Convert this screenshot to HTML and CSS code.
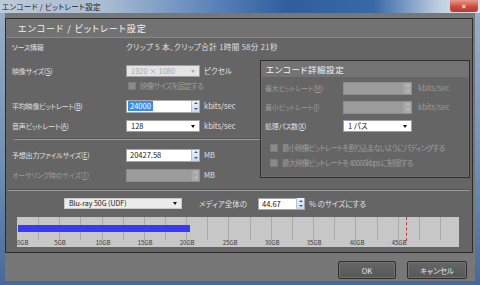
FILE: index.html
```html
<!DOCTYPE html>
<html lang="ja">
<head>
    <meta charset="UTF-8">
    <meta name="viewport" content="width=device-width, initial-scale=1.0">
    <link rel="stylesheet" href="styles.css">
    <title>エンコード / ビットレート設定</title>
</head>
<body>

<div class="titlebar">
    <span class="title">エンコード / ビットレート設定</span>
    <span class="close">✕</span>
</div>

<div class="client">
    <div class="panel">
        <div class="panel-head">エンコード / ビットレート設定</div>

        <div class="main">
            <div class="left">
                <div class="row source">
                    <span class="lbl">ソース情報</span>
                    <span>クリップ 5 本、クリップ合計 1時間 58分 21秒</span>
                </div>
                <div class="row r-size">
                    <span class="lbl">映像サイズ(<u>S</u>)</span>
                    <div class="combo disabled"><span>1920 × 1080</span><i class="arrow"></i></div>
                    <span class="unit">ピクセル</span>
                </div>
                <div class="row check-row left-check">
                    <span class="box"></span>
                    <span class="dim tight">映像サイズを固定する</span>
                </div>
                <div class="row r-avg">
                    <span class="lbl">平均映像ビットレート(<u>B</u>)</span>
                    <div class="spin"><span class="sel">24000</span><span class="spin-btn"><i class="up"></i><i class="down"></i></span></div>
                    <span class="unit">kbits/sec</span>
                </div>
                <div class="row r-audio">
                    <span class="lbl">音声ビットレート(<u>A</u>)</span>
                    <div class="combo"><span>128</span><i class="arrow"></i></div>
                    <span class="unit">kbits/sec</span>
                </div>
                <div class="sep"></div>
                <div class="row r-out">
                    <span class="lbl">予想出力ファイルサイズ(<u>E</u>)</span>
                    <div class="spin"><span>20427.58</span><span class="spin-btn"><i class="up"></i><i class="down"></i></span></div>
                    <span class="unit">MB</span>
                </div>
                <div class="row r-auth">
                    <span class="lbl dim">オーサリング時のサイズ(<u>T</u>)</span>
                    <div class="spin disabled"><span></span><span class="spin-btn"><i class="up"></i><i class="down"></i></span></div>
                    <span class="unit">MB</span>
                </div>
            </div>

            <div class="group">
                <div class="group-head">エンコード詳細設定</div>
                <div class="row g-max">
                    <span class="glbl dim">最大ビットレート(<u>M</u>)</span>
                    <div class="spin disabled"><span></span><span class="spin-btn"><i class="up"></i><i class="down"></i></span></div>
                    <span class="unit dim">kbits/sec</span>
                </div>
                <div class="row g-min">
                    <span class="glbl dim">最小ビットレート(<u>I</u>)</span>
                    <div class="spin disabled"><span></span><span class="spin-btn"><i class="up"></i><i class="down"></i></span></div>
                    <span class="unit dim">kbits/sec</span>
                </div>
                <div class="row g-pass">
                    <span class="glbl">処理パス数(<u>X</u>)</span>
                    <div class="combo"><span>1 パス</span><i class="arrow"></i></div>
                </div>
                <div class="row check-row g-check1">
                    <span class="box"></span>
                    <span class="dim tight">最小映像ビットレートを割り込まないようにパディングする</span>
                </div>
                <div class="row check-row g-check2">
                    <span class="box"></span>
                    <span class="dim tight">最大映像ビットレートを 40000kbps に制限する</span>
                </div>
            </div>
        </div>

        <div class="sep wide"></div>

        <div class="media-row">
            <div class="combo media"><span>Blu-ray 50G (UDF)</span><i class="arrow"></i></div>
            <span class="media-text">メディア全体の</span>
            <div class="spin pct"><span>44.67</span><span class="spin-btn"><i class="up"></i><i class="down"></i></span></div>
            <span>% のサイズにする</span>
        </div>

        <div class="chart">
            <div class="grid"></div>
            <div class="bar" style="width: 172px"></div>
            <div class="limit" style="left: 389px"></div>
            <span class="tick first" style="left: 0px">0GB</span>
            <span class="tick" style="left: 43px">5GB</span>
            <span class="tick" style="left: 86px">10GB</span>
            <span class="tick" style="left: 128px">15GB</span>
            <span class="tick" style="left: 170px">20GB</span>
            <span class="tick" style="left: 213px">25GB</span>
            <span class="tick" style="left: 255px">30GB</span>
            <span class="tick" style="left: 297px">35GB</span>
            <span class="tick" style="left: 340px">40GB</span>
            <span class="tick" style="left: 382px">45GB</span>
        </div>
    </div>

    <div class="buttons">
        <button class="btn ok">OK</button>
        <button class="btn cancel">キャンセル</button>
    </div>
</div>

</body>
</html>
```

FILE: styles.css
```css
* {
    box-sizing: border-box;
}

body {
    margin: 0;
    width: 480px;
    height: 285px;
    overflow: hidden;
    background: linear-gradient(180deg, #9cb0c8 0%, #6f8db3 60%, #46699a 100%);
    font-family: "Noto Sans CJK JP", "Noto Sans", sans-serif;
    font-feature-settings: "palt";
    font-size: 7.5px;
    line-height: 1;
    color: #e0e0e0;
    white-space: nowrap;
}

u {
    text-decoration: underline;
}

/* Title bar */
.titlebar {
    height: 13px;
    display: flex;
    align-items: center;
    padding-left: 2px;
    background: linear-gradient(90deg, #bccad9 0%, #a9bcd2 22%, #6389bc 42%, #2f5d9e 60%, #3a69a8 78%, #c3d2e3 92%, #d8e2ee 100%);
}

.title {
    color: #1e2228;
    font-size: 7.5px;
    letter-spacing: 0.3px;
}

.close {
    margin-left: auto;
    margin-right: 2px;
    align-self: flex-start;
    width: 28px;
    height: 12px;
    border-radius: 0 0 3px 3px;
    background: linear-gradient(#e49a8c, #c9483a 60%, #b83a2d);
    color: #fff;
    font-size: 7px;
    line-height: 12px;
    text-align: center;
}

/* Client area */
.client {
    margin: 0 5px;
    height: 268px;
    padding: 5px 2px 0 0;
    background: #777;
}

.panel {
    height: 235px;
    border: 1px solid #2c2c2c;
    background: #656565;
}

.panel-head {
    height: 19px;
    padding-left: 12px;
    display: flex;
    align-items: center;
    background: #727272;
    border-bottom: 1px solid #8a8a8a;
    color: #f2f2f2;
    font-size: 9px;
    letter-spacing: 1px;
}

.main {
    display: flex;
    height: 145px;
}

.left {
    width: 254px;
    padding-left: 6px;
}

.row {
    display: flex;
    align-items: center;
    height: 14px;
}

.lbl {
    width: 114px;
    flex-shrink: 0;
    font-size: 7px;
    letter-spacing: -0.2px;
}

.dim {
    color: #9c9c9c;
}

.tight {
    letter-spacing: -0.8px;
}

.unit {
    margin-left: 4px;
}

.source {
    height: 18px;
}

.source span + span {
    letter-spacing: 0.4px;
}

.r-size {
    margin-top: 8px;
}

.check-row {
    height: 11px;
}

.left-check {
    margin-top: 2px;
    padding-left: 116px;
}

.r-avg {
    margin-top: 8px;
}

.r-audio {
    margin-top: 6px;
}

.r-out {
    margin-top: 8px;
}

.r-auth {
    margin-top: 6px;
}

.sep {
    margin: 5px 0 0 2px;
    height: 2px;
    border-top: 1px solid #555;
    border-bottom: 1px solid #9a9a9a;
}

.sep.wide {
    margin: 6px 2px 0 2px;
}

/* Checkbox */
.box {
    width: 8px;
    height: 8px;
    margin-right: 4px;
    flex-shrink: 0;
    background: #8a8a8a;
    border: 1px solid #7c7c7c;
}

/* Combo box */
.combo {
    width: 74px;
    height: 12px;
    display: flex;
    align-items: center;
    padding-left: 4px;
    background: #fff;
    border: 1px solid #a0a0a0;
    color: #202020;
}

.combo.disabled {
    background: #e4e4e4;
    color: #a8a8a8;
}

.combo span {
    flex: 1;
}

.arrow {
    width: 0;
    height: 0;
    margin-right: 4px;
    border-left: 2.5px solid transparent;
    border-right: 2.5px solid transparent;
    border-top: 3px solid #111;
}

.combo.disabled .arrow {
    border-top-color: #aaa;
}

/* Spin box */
.spin {
    width: 74px;
    height: 13px;
    display: flex;
    align-items: center;
    padding-left: 1px;
    background: #fff;
    border: 1px solid #a8a8a8;
    color: #1a1a1a;
}

.spin > span:first-child {
    flex: 1;
    padding-left: 2px;
}

.spin .sel {
    flex: 0 0 auto !important;
    padding: 1px 2px;
    background: #3d8ee6;
    color: #fff;
}

.spin .sel + .spin-btn {
    margin-left: auto;
}

.spin-btn {
    width: 8px;
    height: 11px;
    display: flex;
    flex-direction: column;
    justify-content: space-around;
    align-items: center;
    background: linear-gradient(#edf2f9, #cbd9ec);
    border-left: 1px solid #b5c4d8;
}

.up,
.down {
    width: 0;
    height: 0;
    border-left: 2px solid transparent;
    border-right: 2px solid transparent;
}

.up {
    border-bottom: 2px solid #3a5f9a;
}

.down {
    border-top: 2px solid #3a5f9a;
}

.spin.disabled {
    background: #9b9b9b;
    border-color: #8e8e8e;
}

.spin.disabled .spin-btn {
    background: #a9a9a9;
    border-left-color: #a0a0a0;
}

.spin.disabled .up {
    border-bottom-color: #c0c0c0;
}

.spin.disabled .down {
    border-top-color: #c0c0c0;
}

/* Group box */
.group {
    width: 210px;
    height: 118px;
    margin-top: 22px;
    border: 1px solid #2e2e2e;
    box-shadow: inset 0 0 0 1px #6e6e6e;
}

.group-head {
    height: 16px;
    padding-left: 5px;
    display: flex;
    align-items: center;
    background: #737373;
    color: #f2f2f2;
    font-size: 8.5px;
    letter-spacing: 0.6px;
}

.group .row {
    padding-left: 4px;
}

.glbl {
    width: 78px;
    flex-shrink: 0;
    font-size: 7px;
    letter-spacing: -0.2px;
}

.group .spin,
.group .combo {
    width: 69px;
}

.group .unit {
    margin-left: 6px;
}

.g-max {
    margin-top: 4px;
}

.g-min,
.g-pass {
    margin-top: 5px;
}

.g-check1 {
    margin-top: 9px;
    padding-left: 9px !important;
}

.g-check2 {
    margin-top: 4px;
    padding-left: 9px !important;
}

/* Media row */
.media-row {
    display: flex;
    align-items: center;
    height: 11px;
    margin-top: 7px;
    padding-left: 58px;
}

.combo.media {
    width: 118px;
    height: 11px;
    background: #ececec;
    border-color: #c8c8c8;
    font-size: 7px;
}

.media-text {
    margin-left: 17px;
    width: 59px;
}

.spin.pct {
    width: 47px;
    height: 12px;
    margin-right: 4px;
}

/* Chart */
.chart {
    position: relative;
    width: 442px;
    height: 30px;
    margin: 8px 0 0 11px;
    background: #c7c7c7;
}

.grid {
    height: 23px;
    background: repeating-linear-gradient(90deg, transparent 0 20.15px, #aaa 20.15px 21.15px);
    background-position: 1px 0;
}

.bar {
    position: absolute;
    left: 1px;
    top: 8px;
    height: 7px;
    background: #3a3af2;
}

.limit {
    position: absolute;
    top: 0;
    height: 24px;
    border-left: 1px dashed #c83a3a;
}

.tick {
    position: absolute;
    top: 23px;
    transform: translateX(-50%);
    color: #3a3a3a;
    font-size: 6px;
}

.tick.first {
    transform: none;
}

/* Buttons */
.buttons {
    display: flex;
    justify-content: flex-end;
    gap: 11px;
    margin-top: 8px;
    padding-right: 6px;
}

.btn {
    height: 18px;
    border: 1px solid #2e2e2e;
    border-radius: 2px;
    background: linear-gradient(#666, #575757);
    box-shadow: inset 0 0 0 1px #707070;
    color: #e4e4e4;
    font-family: "Noto Sans CJK JP", "Noto Sans", sans-serif;
    font-feature-settings: "palt";
    font-size: 7.5px;
    padding: 0;
}

.btn.ok {
    width: 58px;
}

.btn.cancel {
    width: 60px;
}
```
